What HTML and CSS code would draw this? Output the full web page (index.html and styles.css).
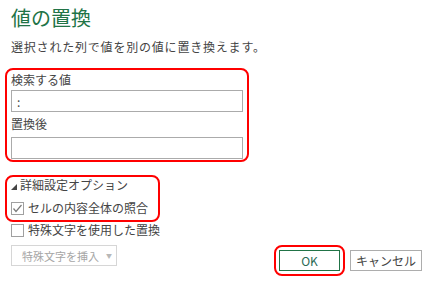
FILE: index.html
```html
<!DOCTYPE html>
<html lang="ja">
  <head>
    <meta charset="UTF-8" />
    <meta name="viewport" content="width=device-width, initial-scale=1.0" />
    <title>値の置換</title>
    <link rel="stylesheet" href="styles.css">
  </head>

  <body>
    <main class="dialog">
      <h1 class="title">値の置換</h1>
      <p class="desc">選択された列で値を別の値に置き換えます。</p>

      <div class="mark group-values">
        <label class="field-label" for="findValue">検索する値</label>
        <input id="findValue" class="text-input" type="text" value=":" />
        <label class="field-label second" for="replaceValue">置換後</label>
        <input id="replaceValue" class="text-input second-input" type="text" />
      </div>

      <div class="mark group-options">
        <div class="option-head">
          <svg class="tri" width="6" height="6" viewBox="0 0 6 6">
            <polygon points="0,6 6,6 6,0" fill="#444" />
          </svg>
          <span>詳細設定オプション</span>
        </div>
        <div class="check-row first">
          <svg class="box" width="13" height="13" viewBox="0 0 13 13">
            <rect x="0.5" y="0.5" width="12" height="12" fill="#fff" stroke="#a0a0a0" />
            <polyline points="2.5,6.5 5,9.5 10.5,3" fill="none" stroke="#7a7a7a" stroke-width="1.2" />
          </svg>
          <span>セルの内容全体の照合</span>
        </div>
      </div>

      <div class="check-row plain">
        <svg class="box" width="13" height="13" viewBox="0 0 13 13">
          <rect x="0.5" y="0.5" width="12" height="12" fill="#fff" stroke="#a0a0a0" />
        </svg>
        <span>特殊文字を使用した置換</span>
      </div>

      <div class="bottom">
        <button class="btn-insert" disabled>特殊文字を挿入<span class="caret">▼</span></button>
        <div class="actions">
          <div class="mark ok-ring">
            <button class="btn btn-ok">OK</button>
          </div>
          <button class="btn btn-cancel">キャンセル</button>
        </div>
      </div>
    </main>
  </body>
</html>
```

FILE: styles.css
```css
body {
  margin: 0;
  background-color: #ffffff;
  color: #444444;
  font-family: "Noto Sans CJK JP", "Noto Sans", sans-serif;
  font-size: 12px;
}

.dialog {
  display: flex;
  flex-direction: column;
  padding: 6px 8px 0 11px;
  width: 430px;
  box-sizing: border-box;
}

.title {
  margin: 0;
  font-size: 20px;
  line-height: 24px;
  font-weight: normal;
  color: #217346;
}

.desc {
  margin: 9px 0 0 0;
  line-height: 16px;
  letter-spacing: 0.8px;
}

.mark {
  border: 2px solid #ff0000;
  border-radius: 8px;
}

.group-values {
  display: flex;
  flex-direction: column;
  margin: 13px 0 0 -6px;
  width: 232px;
  padding: 2px 4px 1px 4px;
}

.field-label {
  line-height: 16px;
}

.field-label.second {
  margin-top: 4px;
}

.text-input {
  margin: 2px 0 0 0;
  height: 22px;
  box-sizing: border-box;
  border: 1px solid #ababab;
  padding: 0 5px;
  font-family: inherit;
  font-size: 12px;
  color: #444444;
  outline: none;
}

.second-input {
  margin-top: 5px;
}

.group-options {
  align-self: flex-start;
  margin: 13px 0 0 -6px;
  width: 147px;
  padding: 0 0 4px 4px;
}

.option-head {
  display: flex;
  align-items: center;
  line-height: 16px;
}

.tri {
  margin: 3px 3px 0 0;
}

.check-row {
  display: flex;
  align-items: center;
  line-height: 16px;
}

.check-row .box {
  margin-right: 4px;
}

.check-row.first {
  margin-top: 7px;
}

.bottom {
  display: flex;
  justify-content: space-between;
  align-items: flex-start;
  margin-top: 7px;
}

.btn-insert {
  display: flex;
  align-items: center;
  white-space: nowrap;
  box-sizing: border-box;
  width: 106px;
  height: 21px;
  padding: 0 0 0 10px;
  border: 1px solid #d6d6d6;
  background: #ffffff;
  color: #a6a6a6;
  font-family: inherit;
  font-size: 11px;
}

.caret {
  font-size: 6px;
  margin-left: 7px;
  color: #b8b8b8;
}

.actions {
  display: flex;
  align-items: center;
  gap: 5px;
}

.ok-ring {
  padding: 3px;
}

.btn {
  height: 21px;
  background: #ffffff;
  font-family: inherit;
  font-size: 12px;
  padding: 0;
}

.btn-ok {
  display: block;
  width: 61px;
  border: 1px solid #217346;
  color: #2a6a55;
}

.btn-cancel {
  width: 72px;
  border: 1px solid #adadad;
  color: #444444;
}
```
